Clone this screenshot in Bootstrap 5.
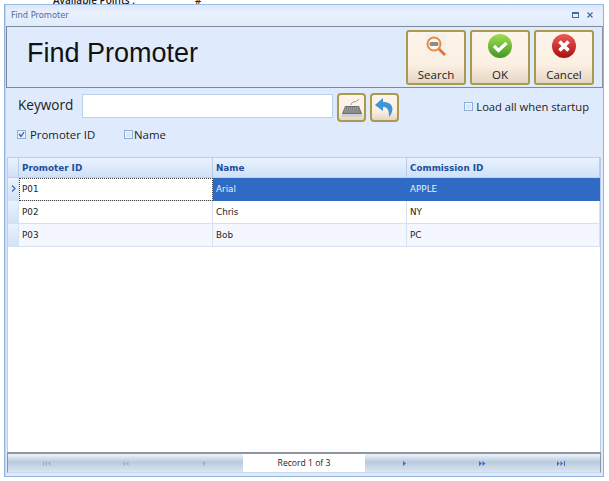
<!DOCTYPE html>
<html lang="en">
<head>
<meta charset="utf-8">
<title>Find Promoter</title>
<link href="https://cdn.jsdelivr.net/npm/bootstrap@5.3.0/dist/css/bootstrap.min.css" rel="stylesheet">
<style>
html,body{margin:0;height:481px;overflow:hidden;background:#fff;font-family:"DejaVu Sans",sans-serif;}
.behind{height:4px;overflow:hidden;padding-left:53px;font-family:"Open Sans",sans-serif;font-size:10px;line-height:1px;color:#222;font-weight:600;white-space:nowrap}
.behind span{margin-left:60px}
.win{width:600px;height:473px;margin-left:4px;border:1px solid #8fb4e0;border-top-color:#9dbde4;background:#dfebfc;padding:0 1px 3px 1px;box-shadow:inset 1px 0 0 #c3d8f2}
.ttl{height:21px;padding:0 5px;font-size:8.3px;color:#4a6c9f;background:linear-gradient(#dbe8fa,#e9f1fd 40%,#dfebfc)}
.ttl svg{display:block}
.hdr{height:62px;border:1px solid #7f8a99;border-right-color:#8a94a2;background:#dfebfc;padding:3px 8px 0 20px;margin-right:-1px}
.bigt{font-family:"Liberation Sans",sans-serif;font-size:27px;color:#111;line-height:1;padding-bottom:10px}
.tbtn{width:60px;height:55px;border:2px solid #a89a4e;border-radius:3px;background:linear-gradient(#fdf4ea,#fbefe2 65%,#e4d6c4);padding:2px 0 0;font-family:"Open Sans",sans-serif;font-size:11.5px;color:#222;line-height:1}
.tbtn span{margin-top:auto;padding-bottom:2px}
.tbtn svg{display:block}
.sq{width:29px;height:29px;border:2px solid #a89a4e;border-radius:4px;background:linear-gradient(#fdf4ea,#fbefe2 65%,#e4d6c4)}
.filt{height:69px;padding:5px 11px 0 11px;font-family:"Open Sans",sans-serif;font-size:11.4px;color:#222}
.kw{font-size:13.6px;line-height:1;width:65px;padding-left:1px;padding-top:5px}
.inp{width:251px;height:24px;background:#fff;border:1px solid #bcd0ea;margin-top:1px}
.cb{width:9px;height:9px;border:1px solid #8eaedb;background:#dbe7f8;display:block;flex:none;box-shadow:inset 0 0 0 1px #eef4fd}
.cbl{line-height:1;white-space:nowrap}
.loadall{padding-top:8px;padding-right:2px;font-size:11.2px;gap:3px}
.crow{margin-top:7px}
.pid{width:94px;margin-left:4px}
.nm{margin-left:1px}
.grid{margin:0 1px 0 1px;height:296px;background:#fff;border:1px solid #b7cdea;border-bottom:0;font-size:8.8px;color:#222}
.gr{display:grid;grid-template-columns:11px 194px 194px 1fr}
.gr>div{border-right:1px solid #d5e2f4;border-bottom:1px solid #d5e2f4;padding-left:3px;padding-top:2px;display:flex;align-items:center}
.gh{height:20px}
.gh>div{background:linear-gradient(#e9f2fe,#cfe1f8);font-weight:700;color:#1f4e9c;border-right-color:#b7cdea;border-bottom-color:#bcd0ea}
.gd{height:23px}
.gd>.rh{background:linear-gradient(#eaf2fd,#d2e2f6);padding:0;justify-content:center}
.alt>div{background:#f4f8fe}
.sel>div.s{background:#2f6ac4;color:#e8f0fb;border-color:#2f6ac4}
.sel>div.f{outline:1px dotted #444;outline-offset:-1px;background:#fff}
.navb{height:21px;margin:0 1px;border:1px solid #8d95a1;border-bottom-color:#cdd9ea;border-top:2px solid #8d95a1;background:linear-gradient(#eef3fa,#b9cade 45%,#dbe5f1);font-family:"Open Sans",sans-serif;font-size:8.6px;color:#222}
.navp{flex:1;height:100%;display:flex;align-items:center;justify-content:center}
.navp svg{display:block}
.rec{width:122px;height:100%;background:#fff;display:flex;align-items:center;justify-content:center}
</style>
</head>
<body>
<div class="behind">Available Points :<span>#</span></div>
<div class="win d-flex flex-column">
  <div class="ttl d-flex align-items-center justify-content-between">
    <span>Find Promoter</span>
    <span class="d-flex align-items-center gap-2 pe-1">
      <svg width="7" height="6" viewBox="0 0 7 6"><rect x=".5" y=".5" width="6" height="5" fill="none" stroke="#4a6c9f"/><rect x="0" y="0" width="7" height="2" fill="#4a6c9f"/></svg>
      <svg width="6" height="6" viewBox="0 0 6 6"><path d="M.5 .5L5.500 5.500M5.500 .5L.5 5.500" stroke="#4a6c9f" stroke-width="1.300"/></svg>
    </span>
  </div>
  <div class="hdr d-flex align-items-center justify-content-between">
    <div class="bigt">Find Promoter</div>
    <div class="d-flex gap-1 align-self-start">
      <div class="tbtn d-flex flex-column align-items-center">
        <svg width="24" height="24" viewBox="0 0 24 24"><rect x="1" y="0" width="21" height="22" fill="#f3f1ee"/><circle cx="10" cy="10" r="6.500" fill="#fdf8f2" stroke="#ee8a3c" stroke-width="2"/><rect x="5.500" y="8" width="9" height="4" rx="1.500" fill="#8d8d8d"/><path d="M15 15L21 21" stroke="#e8702a" stroke-width="2.600"/></svg>
        <span>Search</span>
      </div>
      <div class="tbtn d-flex flex-column align-items-center">
        <svg width="24" height="24" viewBox="0 0 24 24"><defs><linearGradient id="g" x1="0" y1="0" x2="0" y2="1"><stop offset="0" stop-color="#a3dc55"/><stop offset="1" stop-color="#3f9a1e"/></linearGradient></defs><circle cx="12" cy="12" r="12" fill="url(#g)"/><path d="M6 12L10.500 16.500L18.500 9" fill="none" stroke="#fff" stroke-width="3.200"/></svg>
        <span>OK</span>
      </div>
      <div class="tbtn d-flex flex-column align-items-center">
        <svg width="24" height="24" viewBox="0 0 24 24"><defs><linearGradient id="r" x1="0" y1="0" x2="0" y2="1"><stop offset="0" stop-color="#ee5a55"/><stop offset="1" stop-color="#a80f12"/></linearGradient></defs><circle cx="12" cy="12" r="12" fill="url(#r)"/><path d="M7.500 7.500L16.500 16.500M16.500 7.500L7.500 16.500" stroke="#fff" stroke-width="3.600"/></svg>
        <span>Cancel</span>
      </div>
    </div>
  </div>
  <div class="filt">
    <div class="d-flex align-items-start">
      <div class="kw">Keyword</div>
      <div class="inp"></div>
      <div class="sq ms-1 d-flex align-items-center justify-content-center">
        <svg width="22" height="22" viewBox="0 0 22 22"><path d="M10 9C10 5 15 7 18 3" fill="none" stroke="#999"/><path d="M4 10H18L21 18H1Z" fill="#6f6f6f"/><path d="M4 12H18M3.500 14H18.500M3 16H19" stroke="#ddd" stroke-width=".8" stroke-dasharray="1.400 .6"/><rect x="1" y="18" width="20" height="3" fill="#cfcfcf"/></svg>
      </div>
      <div class="sq ms-1 d-flex align-items-center justify-content-center">
        <svg width="21" height="21" viewBox="0 0 21 21"><path d="M9 1L1 8L9 14V10C13 10 15 12 15 20C20 15 21 5 9 5Z" fill="#3e95d8"/></svg>
      </div>
      <div class="ms-auto d-flex align-items-center cbl loadall"><i class="cb"></i><span>Load all when startup</span></div>
    </div>
    <div class="d-flex align-items-center cbl crow">
      <i class="cb d-flex align-items-center justify-content-center"><svg width="7" height="7" viewBox="0 0 7 7"><path d="M1 3L3 5.500L6 1" fill="none" stroke="#3f5f95" stroke-width="1.300"/></svg></i>
      <span class="pid">Promoter ID</span>
      <i class="cb"></i>
      <span class="nm">Name</span>
    </div>
  </div>
  <div class="grid">
    <div class="gr gh"><div></div><div>Promoter ID</div><div>Name</div><div>Commission ID</div></div>
    <div class="gr gd sel"><div class="rh"><svg width="5" height="7" viewBox="0 0 5 7"><path d="M1 .5L4 3.500L1 6.500" fill="none" stroke="#3f70b5" stroke-width="1.300"/></svg></div><div class="f">P01</div><div class="s">Arial</div><div class="s">APPLE</div></div>
    <div class="gr gd"><div class="rh"></div><div>P02</div><div>Chris</div><div>NY</div></div>
    <div class="gr gd alt"><div class="rh"></div><div>P03</div><div>Bob</div><div>PC</div></div>
  </div>
  <div class="navb d-flex align-items-center">
    <div class="navp"><svg width="8" height="5" viewBox="0 0 8 5" fill="#a3b0c2"><path d="M0 0H1V5H0ZM4 0V5L1.500 2.500ZM7.500 0V5L5 2.500Z"/></svg></div>
    <div class="navp"><svg width="7" height="5" viewBox="0 0 7 5" fill="#a3b0c2"><path d="M3 0V5L.5 2.500ZM6.500 0V5L4 2.500Z"/></svg></div>
    <div class="navp"><svg width="3" height="5" viewBox="0 0 3 5" fill="#a3b0c2"><path d="M3 0V5L0 2.500Z"/></svg></div>
    <div class="rec">Record 1 of 3</div>
    <div class="navp"><svg width="3" height="5" viewBox="0 0 3 5" fill="#3f70b5"><path d="M0 0V5L3 2.500Z"/></svg></div>
    <div class="navp"><svg width="7" height="5" viewBox="0 0 7 5" fill="#3f70b5"><path d="M0 0V5L3 2.500ZM3.500 0V5L6.500 2.500Z"/></svg></div>
    <div class="navp"><svg width="8" height="5" viewBox="0 0 8 5" fill="#3f70b5"><path d="M0 0V5L2.500 2.500ZM3.500 0V5L6 2.500ZM7 0H8V5H7Z"/></svg></div>
  </div>
</div>
<script src="https://cdn.jsdelivr.net/npm/bootstrap@5.3.0/dist/js/bootstrap.bundle.min.js"></script>
</body>
</html>
